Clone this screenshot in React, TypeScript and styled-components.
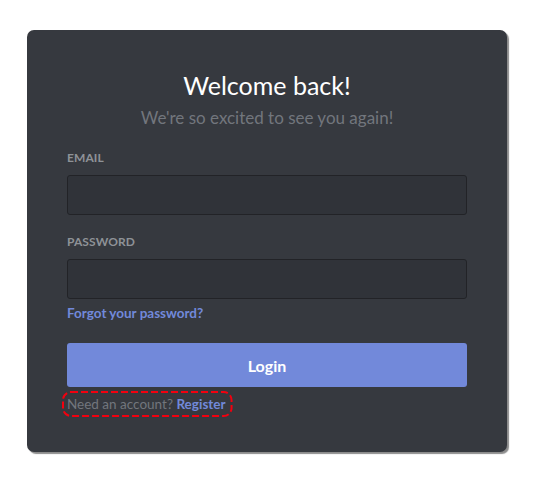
import React from "react";
import styled, { createGlobalStyle } from "styled-components";

const Global = createGlobalStyle`
  html, body { margin: 0; padding: 0; background: #ffffff; }
  body { font-family: Lato, "Open Sans", sans-serif; }
  * { box-sizing: border-box; }
`;

const Page = styled.div`
  width: 536px;
  height: 486px;
  padding: 30px 0 0 27px;
`;

const Card = styled.form`
  width: 480px;
  background: #36393f;
  border-radius: 7px;
  box-shadow: 2px 2px 1px rgba(0, 0, 0, 0.45);
  padding: 40px 40px 35px;
  display: flex;
  flex-direction: column;
`;

const Title = styled.h1`
  margin: 0;
  text-align: center;
  color: #ffffff;
  font-size: 25px;
  line-height: 30px;
  font-weight: 400;
`;

const Subtitle = styled.p`
  margin: 8px 0 0;
  text-align: center;
  color: #72767d;
  font-size: 17px;
  line-height: 20px;
`;

const Field = styled.div<{ $top: number }>`
  margin-top: ${(p) => p.$top}px;
  display: flex;
  flex-direction: column;
`;

const Label = styled.label`
  color: #8e9297;
  font-size: 12px;
  line-height: 16px;
  font-weight: 700;
  text-transform: uppercase;
  letter-spacing: 0.1px;
  margin-bottom: 9px;
`;

const Input = styled.input`
  width: 400px;
  height: 40px;
  background: #303339;
  border: 1px solid #222327;
  border-radius: 3px;
  outline: none;
  color: #dcddde;
  font-size: 16px;
  padding: 0 10px;
  font-family: inherit;
`;

const Link = styled.a`
  color: #7289da;
  font-size: 13.5px;
  font-weight: 700;
  text-decoration: none;
  cursor: pointer;
`;

const Forgot = styled(Link)`
  margin-top: 6px;
  line-height: 16px;
  align-self: flex-start;
`;

const Button = styled.button`
  margin-top: 22px;
  width: 400px;
  height: 44px;
  border: none;
  border-radius: 3px;
  background: #7289da;
  color: #ffffff;
  font-size: 16px;
  font-weight: 700;
  font-family: inherit;
  cursor: pointer;
`;

const Footer = styled.div`
  position: relative;
  margin-top: 4px;
  align-self: flex-start;
  margin-left: -5px;
  padding: 4px 7px 4px 5px;
  color: #72767d;
  font-size: 13.5px;
  line-height: 18px;
`;

const Highlight = styled.svg`
  position: absolute;
  inset: 0;
  width: 100%;
  height: 100%;
  overflow: visible;
  pointer-events: none;
`;

export default function App() {
  return (
    <Page>
      <Global />
      <Card onSubmit={(e) => e.preventDefault()}>
        <Title>Welcome back!</Title>
        <Subtitle>We're so excited to see you again!</Subtitle>
        <Field $top={22}>
          <Label>Email</Label>
          <Input type="email" />
        </Field>
        <Field $top={19}>
          <Label>Password</Label>
          <Input type="password" />
        </Field>
        <Forgot>Forgot your password?</Forgot>
        <Button type="submit">Login</Button>
        <Footer>
          Need an account? <Link>Register</Link>
          <Highlight>
            <rect
              x="1"
              y="1"
              width="calc(100% - 2px)"
              height="calc(100% - 2px)"
              rx="8"
              ry="8"
              fill="none"
              stroke="#f2000f"
              strokeWidth="2"
              strokeDasharray="7 3"
            />
          </Highlight>
        </Footer>
      </Card>
    </Page>
  );
}
